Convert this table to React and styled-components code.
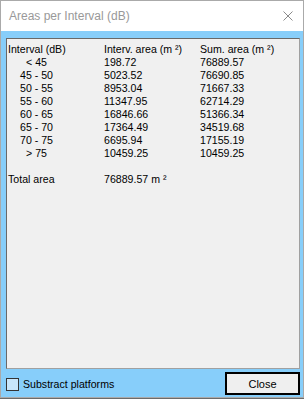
import React from "react";
import styled, { createGlobalStyle } from "styled-components";

const Global = createGlobalStyle`
  html, body {
    margin: 0;
    padding: 0;
    background: #6b6b6b;
  }
  body {
    font-family: "Liberation Sans", Arial, sans-serif;
  }
`;

const Window = styled.div`
  box-sizing: border-box;
  width: 304px;
  height: 398px;
  border: 1px solid #aaaaaa;
  display: flex;
  flex-direction: column;
  background: #87cefa;
`;

const TitleBar = styled.div`
  height: 30px;
  flex: none;
  background: #ffffff;
  display: flex;
  align-items: center;
  justify-content: space-between;
  padding: 0 10px 0 8px;
`;

const Title = styled.span`
  font-family: "Liberation Sans", Arial, sans-serif;
  font-size: 12px;
  color: #999999;
`;

const CloseGlyph = styled.svg`
  width: 10px;
  height: 10px;
  display: block;
`;

const Client = styled.div`
  flex: 1;
  display: flex;
  flex-direction: column;
  padding: 7px 3px 0 5px;
`;

const Panel = styled.div`
  box-sizing: border-box;
  height: 331px;
  background: #f0f0f0;
  border: 1px solid #a0a0a0;
  border-top-color: #696969;
  border-left-color: #696969;
  padding: 4px 0 0 1px;
  font-size: 10.6px;
  color: #000;
`;

const Row = styled.div`
  display: grid;
  grid-template-columns: 96px 96px 1fr;
  height: 13px;
  line-height: 13px;
  white-space: pre;
`;

const Cell = styled.span`
  padding-left: ${(p) => p.$indent || 0}px;
`;

const Footer = styled.div`
  display: flex;
  align-items: center;
  justify-content: space-between;
  margin-top: 3px;
`;

const CheckLabel = styled.label`
  display: flex;
  align-items: center;
  gap: 4px;
  font-size: 10.6px;
  color: #000;
  margin-top: 1px;
`;

const Box = styled.span`
  box-sizing: border-box;
  width: 13px;
  height: 13px;
  border: 1px solid #333333;
  background: #c8e6fa;
`;

const Button = styled.button`
  box-sizing: border-box;
  width: 75px;
  height: 23px;
  border: 2px solid #000;
  background: #efefef;
  font-family: "Liberation Sans", Arial, sans-serif;
  font-size: 11px;
  color: #000;
  padding: 0;
`;

const rows = [
  ["< 45", 18, "198.72", "76889.57"],
  ["45 - 50", 12, "5023.52", "76690.85"],
  ["50 - 55", 12, "8953.04", "71667.33"],
  ["55 - 60", 12, "11347.95", "62714.29"],
  ["60 - 65", 12, "16846.66", "51366.34"],
  ["65 - 70", 12, "17364.49", "34519.68"],
  ["70 - 75", 12, "6695.94", "17155.19"],
  ["> 75", 18, "10459.25", "10459.25"],
];

export default function App() {
  return (
    <>
      <Global />
      <Window>
        <TitleBar>
          <Title>Areas per Interval (dB)</Title>
          <CloseGlyph viewBox="0 0 10 10">
            <path d="M0.5 0.5 L9.5 9.5 M9.5 0.5 L0.5 9.5" stroke="#8a8a8a" strokeWidth="1" fill="none" />
          </CloseGlyph>
        </TitleBar>
        <Client>
          <Panel>
            <Row>
              <Cell>Interval (dB)</Cell>
              <Cell>Interv. area (m ²)</Cell>
              <Cell>Sum. area (m ²)</Cell>
            </Row>
            {rows.map(([label, indent, a, s]) => (
              <Row key={label}>
                <Cell $indent={indent}>{label}</Cell>
                <Cell>{a}</Cell>
                <Cell>{s}</Cell>
              </Row>
            ))}
            <Row />
            <Row>
              <Cell>Total area</Cell>
              <Cell>76889.57 m ²</Cell>
              <Cell />
            </Row>
          </Panel>
          <Footer>
            <CheckLabel>
              <Box />
              Substract platforms
            </CheckLabel>
            <Button>Close</Button>
          </Footer>
        </Client>
      </Window>
    </>
  );
}
